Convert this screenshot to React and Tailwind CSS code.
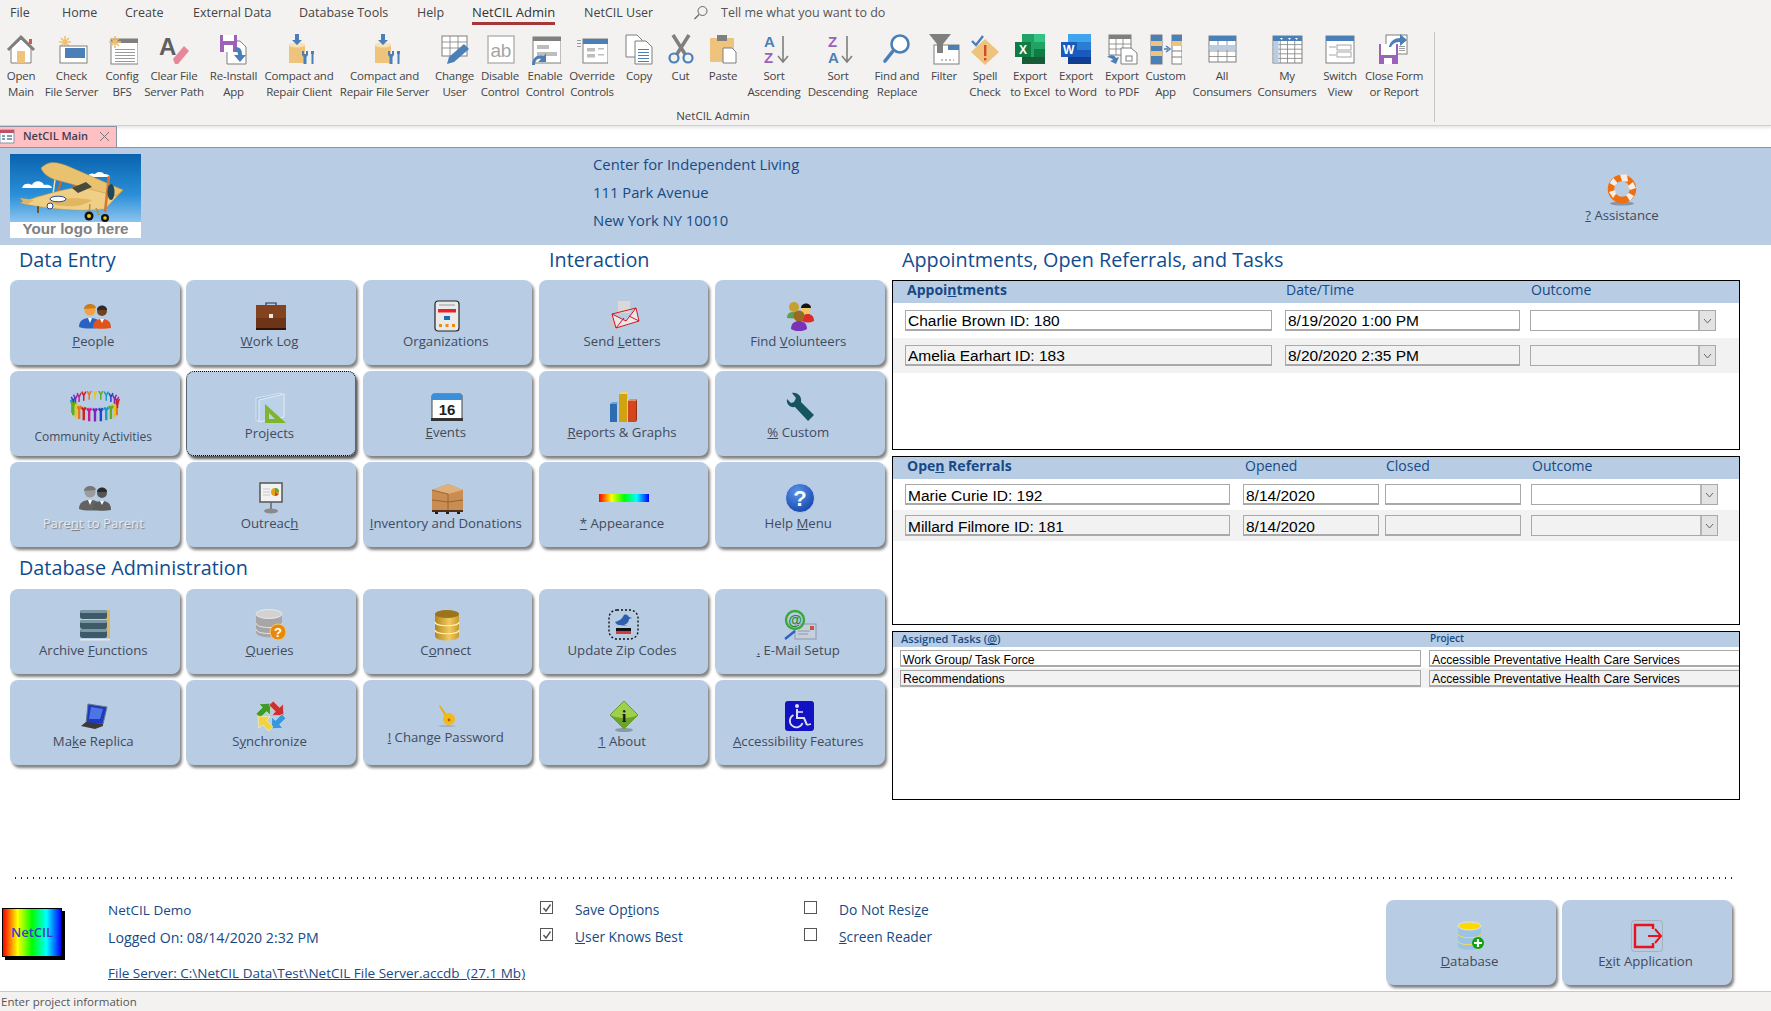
import React from 'react';

const BLUE = '#4a7fb8';
const GRAY = '#7f7f7f';
const TAN = '#eec47c';
const PURPLE = '#9a62b8';

const Sun = ({ x, y }) => (
  <g stroke="#f0c070" strokeWidth="1.6">
    <path d={`M${x - 6} ${y}h12M${x} ${y - 6}v12M${x - 4} ${y - 4}l8 8M${x - 4} ${y + 4}l8 -8`} />
  </g>
);
const Lines = ({ x, y, w, n, gap = 3, c = '#9a9a9a' }) => (
  <g stroke={c} strokeWidth="1">
    {Array.from({ length: n }).map((_, i) => (
      <path key={i} d={`M${x} ${y + i * gap + 0.5}h${w}`} />
    ))}
  </g>
);
const Grid = ({ x, y, w, h, cols, rows, head = BLUE }) => {
  const cells = [];
  for (let i = 1; i < cols; i++) cells.push(<path key={`c${i}`} d={`M${x + (w / cols) * i} ${y + 4}v${h - 4}`} />);
  for (let i = 0; i < rows; i++) cells.push(<path key={`r${i}`} d={`M${x} ${y + 4 + ((h - 4) / rows) * i}h${w}`} />);
  return (
    <g>
      <rect x={x} y={y} width={w} height={h} fill="#fff" stroke={GRAY} />
      <g stroke={GRAY} strokeWidth="0.8">{cells}</g>
      <rect x={x} y={y} width={w} height="5" fill={head} />
    </g>
  );
};
const Tools = ({ x }) => (
  <g fill={BLUE}>
    <path d={`M${x} 18l2 0 0 3 2 0 0 -3 2 0 0 4 -1.5 2 0 7 -3 0 0 -7 -1.5 -2z`} />
    <path d={`M${x + 9} 18l3 0 0 3 -0.5 0 0 10 -2 0 0 -10 -0.5 0z`} />
  </g>
);

const ribbonIcons = {
  open: (
    <g>
      <path d="M6 15L16 6l10 9v15H6z" fill="#fff" stroke={GRAY} />
      <path d="M3 17L16 4l13 13" fill="none" stroke={GRAY} strokeWidth="3" />
      <rect x="12" y="18" width="8" height="12" fill={TAN} />
      <rect x="24" y="6" width="3" height="5" fill="#d9593a" />
    </g>
  ),
  check: (
    <g>
      <Sun x={9} y={9} />
      <rect x="4" y="13" width="27" height="17" fill="#fff" stroke={GRAY} />
      <rect x="9" y="15" width="20" height="10" fill={BLUE} />
    </g>
  ),
  config: (
    <g>
      <rect x="5" y="6" width="27" height="25" fill="#fff" stroke={GRAY} />
      <rect x="5" y="6" width="27" height="4" fill={GRAY} />
      <Sun x={9} y={9} />
      <Lines x={9} y={16} w={20} n={5} />
    </g>
  ),
  clear: (
    <g>
      <text x="1" y="22" fontFamily="'Liberation Sans', sans-serif" fontWeight="700" fontSize="24" fill="#5f5f5f">A</text>
      <path d="M15 26L26 13l5 5-11 13h-3z" fill="#e8879a" />
    </g>
  ),
  reinstall: (
    <g>
      <path d="M9 8h13l6 6v17H9z" fill="#fff" stroke={GRAY} />
      <rect x="2" y="2" width="17" height="17" fill={PURPLE} />
      <rect x="5" y="2" width="11" height="6" fill="#fff" />
      <rect x="6" y="12" width="9" height="7" fill="#fff" />
      <path d="M17 14c6 0 7 3 7 8h4l-6 7-6-7h4c0-3-1-4-3-4z" fill={BLUE} />
    </g>
  ),
  compact: (
    <g>
      <path d="M6 12c0-3 16-3 16 0v18H6z" fill={TAN} />
      <ellipse cx="14" cy="12" rx="8" ry="2.5" fill="#f8e3b6" />
      <path d="M12 1h4v6h3l-5 5-5-5h3z" fill={BLUE} />
      <Tools x={19} />
    </g>
  ),
  change: (
    <g>
      <rect x="3" y="3" width="25" height="20" fill="#fff" stroke={GRAY} />
      <path d="M3 9h25M3 15h25M11 3v20M19 3v20" stroke={GRAY} strokeWidth="0.8" />
      <path d="M8 31l2-7 15-13 5 5-15 13z" fill={BLUE} />
    </g>
  ),
  disable: (
    <g>
      <rect x="4" y="3" width="26" height="27" fill="#fff" stroke="#b5b5b5" strokeWidth="1.5" />
      <text x="6.5" y="24" fontFamily="'Liberation Sans', sans-serif" fontSize="19" fill="#a5a5a5">ab</text>
    </g>
  ),
  enable: (
    <g>
      <rect x="4" y="4" width="28" height="26" fill="#fff" stroke={GRAY} />
      <rect x="4" y="4" width="28" height="4" fill={GRAY} />
      <rect x="8" y="12" width="12" height="4" fill="#bdbdbd" />
      <rect x="8" y="19" width="20" height="4" fill="#bdbdbd" />
      <path d="M3 32c0-8 6-11 12-9l2-3v9h-8l3-3c-4-1-6 2-6 6z" fill={BLUE} />
    </g>
  ),
  override: (
    <g>
      <rect x="7" y="6" width="25" height="24" fill="#fff" stroke={GRAY} />
      <rect x="7" y="6" width="25" height="5" fill={BLUE} />
      <rect x="11" y="15" width="8" height="3.5" fill="#bdbdbd" />
      <rect x="11" y="21" width="8" height="3.5" fill="#bdbdbd" />
      <rect x="22" y="15" width="6" height="1.5" fill="#bdbdbd" />
      <rect x="22" y="21" width="6" height="1.5" fill="#bdbdbd" />
      <Lines x={1} y={7} w={4} n={3} />
    </g>
  ),
  copy: (
    <g>
      <path d="M3 2h11l5 5v17H3z" fill="#fff" stroke={GRAY} />
      <path d="M12 8h11l6 6v17H12z" fill="#fff" stroke={GRAY} />
      <Lines x={15} y={16} w={11} n={5} c={BLUE} />
    </g>
  ),
  cut: (
    <g>
      <path d="M8 2l12 19M24 2L12 21" stroke={GRAY} strokeWidth="3.5" fill="none" />
      <circle cx="9" cy="25" r="4.5" fill="none" stroke={BLUE} strokeWidth="2.2" />
      <circle cx="23" cy="25" r="4.5" fill="none" stroke={BLUE} strokeWidth="2.2" />
    </g>
  ),
  paste: (
    <g>
      <rect x="3" y="5" width="24" height="24" rx="1" fill={TAN} />
      <rect x="10" y="2" width="10" height="6" fill={GRAY} />
      <path d="M16 15h9l4 4v11H16z" fill="#fff" stroke={GRAY} />
    </g>
  ),
  asc: (
    <g fontFamily="'Liberation Sans', sans-serif" fontSize="15" fontWeight="700">
      <text x="6" y="14" fill={BLUE}>A</text>
      <text x="6" y="30" fill={PURPLE}>Z</text>
      <path d="M25 3v25M20 23l5 6 5-6" stroke={GRAY} strokeWidth="1.6" fill="none" />
    </g>
  ),
  desc: (
    <g fontFamily="'Liberation Sans', sans-serif" fontSize="15" fontWeight="700">
      <text x="6" y="14" fill={PURPLE}>Z</text>
      <text x="6" y="30" fill={BLUE}>A</text>
      <path d="M25 3v25M20 23l5 6 5-6" stroke={GRAY} strokeWidth="1.6" fill="none" />
    </g>
  ),
  find: (
    <g>
      <circle cx="19" cy="11" r="8.5" fill="#fff" stroke={BLUE} strokeWidth="2.6" />
      <path d="M12 18L4 28" stroke={BLUE} strokeWidth="3.6" strokeLinecap="round" />
    </g>
  ),
  filter: (
    <g>
      <rect x="6" y="12" width="25" height="19" fill="#fff" stroke={GRAY} />
      <rect x="20" y="12" width="11" height="5" fill={BLUE} />
      <path d="M1 1h22l-8 10v9h-6v-9z" fill={GRAY} />
      <path d="M13 27h13" stroke={GRAY} strokeDasharray="2 2" />
    </g>
  ),
  spell: (
    <g>
      <path d="M16 6l14 13-14 13L2 19z" fill={TAN} />
      <rect x="15" y="12" width="2.4" height="11" fill="#d9472b" />
      <rect x="15" y="25" width="2.4" height="2.4" fill="#d9472b" />
      <path d="M3 8l4 4 7-9" stroke={BLUE} strokeWidth="2.4" fill="none" />
    </g>
  ),
  excel: (
    <g>
      <rect x="8" y="1" width="23" height="30" fill="#21a366" />
      <rect x="20" y="1" width="11" height="8" fill="#33c481" />
      <rect x="8" y="9" width="12" height="8" fill="#21a366" />
      <rect x="20" y="16" width="11" height="8" fill="#107c41" />
      <rect x="8" y="24" width="23" height="7" fill="#185c37" />
      <rect x="1" y="9" width="16" height="15" fill="#107c41" />
      <text x="5" y="21" fontFamily="'Liberation Sans', sans-serif" fontSize="12" fontWeight="700" fill="#fff">X</text>
    </g>
  ),
  word: (
    <g>
      <rect x="8" y="1" width="23" height="8" fill="#41a5ee" />
      <rect x="8" y="9" width="23" height="8" fill="#2b7cd3" />
      <rect x="8" y="17" width="23" height="7" fill="#185abd" />
      <rect x="8" y="24" width="23" height="7" fill="#103f91" />
      <rect x="1" y="9" width="16" height="15" fill="#185abd" />
      <text x="3" y="21" fontFamily="'Liberation Sans', sans-serif" fontSize="12" fontWeight="700" fill="#fff">W</text>
    </g>
  ),
  pdf: (
    <g>
      <rect x="3" y="2" width="22" height="20" fill="#fff" stroke={GRAY} />
      <rect x="3" y="2" width="22" height="4" fill={GRAY} />
      <path d="M3 11h22M3 16h22M10 6v16M17 6v16" stroke={GRAY} strokeWidth="0.8" />
      <path d="M15 15h10l6 5v11H15z" fill="#fff" stroke={GRAY} />
      <rect x="20" y="23" width="6" height="5" fill="none" stroke={GRAY} />
      <path d="M1 24c4-3 8-2 9 1l3-1-3 7-6-3 3-1c-1-2-3-2-6-3z" fill={BLUE} />
    </g>
  ),
  custom: (
    <g>
      <rect x="1" y="2" width="11" height="29" fill="#fff" stroke={GRAY} />
      <rect x="1" y="2" width="11" height="6" fill={BLUE} />
      <rect x="1" y="8" width="11" height="5" fill={TAN} />
      <rect x="1" y="13" width="11" height="5" fill={BLUE} />
      <rect x="1" y="18" width="11" height="5" fill={TAN} />
      <rect x="1" y="23" width="11" height="8" fill={BLUE} />
      <rect x="22" y="2" width="10" height="29" fill="#fff" stroke={GRAY} />
      <rect x="22" y="2" width="10" height="6" fill={BLUE} />
      <rect x="22" y="8" width="10" height="5" fill={TAN} />
      <path d="M22 18h10M22 24h10" stroke={GRAY} />
      <path d="M14 16h4M16 13l4 3-4 3" stroke={BLUE} strokeWidth="1.5" fill="none" />
    </g>
  ),
  all: (
    <g>
      <Grid x={3} y={3} w={27} h={26} cols={3} rows={4} />
      <rect x="3.5" y="12" width="26" height="5" fill="#b8cce4" />
    </g>
  ),
  my: (
    <g>
      <Grid x={2} y={3} w={29} h={27} cols={4} rows={5} head="#4a7fb8" />
      <rect x="2.5" y="8" width="5" height="21.5" fill="#b8cce4" />
      <path d="M9 5h3l-1.5 2zM17 5h3l-1.5 2zM24 5h3l-1.5 2z" fill="#fff" />
    </g>
  ),
  switch: (
    <g>
      <rect x="2" y="3" width="28" height="27" fill="#fff" stroke={GRAY} />
      <rect x="2" y="3" width="28" height="5" fill={BLUE} />
      <path d="M5 14h7M5 22h7" stroke="#a5a5a5" />
      <rect x="13" y="12" width="14" height="5" fill="#fff" stroke="#a5a5a5" />
      <rect x="13" y="19" width="14" height="5" fill="#fff" stroke="#a5a5a5" />
    </g>
  ),
  close: (
    <g>
      <rect x="8" y="2" width="21" height="19" fill="#fff" stroke={GRAY} />
      <Lines x={21} y={13} w={6} n={3} gap={2} />
      <rect x="1" y="11" width="19" height="20" fill={PURPLE} />
      <rect x="3" y="11" width="15" height="11" fill="#fff" />
      <rect x="6" y="25" width="8" height="6" fill="#fff" />
      <path d="M11 14c1-6 6-9 11-9V1l7 6-7 6V9c-4 0-7 1-9 5z" fill={BLUE} />
    </g>
  ),
};

const ribbon = [
  ['open', 38, 'Open', 'Main'],
  ['check', 63, 'Check', 'File Server'],
  ['config', 38, 'Config', 'BFS'],
  ['clear', 66, 'Clear File', 'Server Path'],
  ['reinstall', 53, 'Re-Install', 'App'],
  ['compact', 78, 'Compact and', 'Repair Client'],
  ['compact', 93, 'Compact and', 'Repair File Server'],
  ['change', 47, 'Change', 'User'],
  ['disable', 44, 'Disable', 'Control'],
  ['enable', 46, 'Enable', 'Control'],
  ['override', 48, 'Override', 'Controls'],
  ['copy', 46, 'Copy', ''],
  ['cut', 37, 'Cut', ''],
  ['paste', 48, 'Paste', ''],
  ['asc', 54, 'Sort', 'Ascending'],
  ['desc', 74, 'Sort', 'Descending'],
  ['find', 44, 'Find and', 'Replace'],
  ['filter', 50, 'Filter', ''],
  ['spell', 32, 'Spell', 'Check'],
  ['excel', 58, 'Export', 'to Excel'],
  ['word', 34, 'Export', 'to Word'],
  ['pdf', 58, 'Export', 'to PDF'],
  ['custom', 29, 'Custom', 'App'],
  ['all', 84, 'All', 'Consumers'],
  ['my', 46, 'My', 'Consumers'],
  ['switch', 60, 'Switch', 'View'],
  ['close', 48, 'Close Form', 'or Report'],
];

const menu = [
  ['File', 'w-[52px]'],
  ['Home', 'w-[63px]'],
  ['Create', 'w-[68px]'],
  ['External Data', 'w-[106px]'],
  ['Database Tools', 'w-[118px]'],
  ['Help', 'w-[55px]'],
];

const People = ({ a, b, c, d, e }) => (
  <svg width="32" height="32" viewBox="0 0 32 32">
    <circle cx="11" cy="10" r="5.5" fill={a} />
    <path d="M5 9c0-6 11-7 12-1z" fill={e} />
    <path d="M0 27c0-7 5-9 11-9s11 2 11 9c-6 2-16 2-22 0z" fill={b} />
    <path d="M9 18l2 5 2-5z" fill="#fff" />
    <circle cx="23" cy="11" r="5" fill={c} />
    <path d="M18 10c0-6 10-6 10 0z" fill="#2b2b2b" />
    <path d="M14 28c0-7 4-9 9-9s9 2 9 9c-5 1-13 1-18 0z" fill={d} />
    <path d="M21 19l2 4 2-4z" fill="#fff" />
  </svg>
);

const ringColors = ['#d01f1f', '#e0771a', '#e8c61a', '#5cae21', '#1c9bc4', '#2545c9', '#7d26b8', '#c21e8f'];

const bigIcons = {
  people: <People a="#f2a044" b="#2a62c4" c="#6e4322" d="#e0531e" e="#c97c20" />,
  parent: <People a="#9c9c9c" b="#636363" c="#555" d="#5c5c5c" e="#777" />,
  log: (
    <svg width="32" height="32" viewBox="0 0 32 32">
      <path d="M11 6V3h10v3" fill="none" stroke="#333" strokeWidth="1.2" />
      <rect x="1" y="5" width="30" height="25" rx="1.5" fill="#6e3418" />
      <rect x="1" y="5" width="30" height="13" fill="#84431f" />
      <rect x="14" y="14" width="4" height="4" fill="#e8e8e8" />
      <rect x="1" y="28" width="30" height="2" fill="#2e1408" />
    </svg>
  ),
  org: (
    <svg width="26" height="32" viewBox="0 0 26 32">
      <rect x="1" y="1" width="24" height="30" rx="3" fill="#eaeaea" stroke="#222" strokeWidth="1.2" />
      <rect x="4" y="9" width="18" height="3.5" fill="#e8222a" />
      <rect x="10" y="16" width="6" height="4" fill="#1c6ab0" />
      <path d="M5 24h3v3H5zM11.5 24h3v3h-3zM18 24h3v3h-3z" fill="#f08a12" />
      <path d="M5 5h16" stroke="#9a9a9a" />
    </svg>
  ),
  letters: (
    <svg width="32" height="32" viewBox="0 0 32 32">
      <rect x="10" y="1" width="12" height="12" fill="#d9d9d9" />
      <path d="M1 24l3-8 6 4-2 10z" fill="#c8c8c8" />
      <path d="M4 14l24-6 3 13-23 7zM4 14l14 7 10-13M8 28l8-10M31 21l-10-5" fill="#e6e8ec" stroke="#d8141c" strokeWidth="1" strokeLinejoin="round" />
    </svg>
  ),
  volunteers: (
    <svg width="28" height="30" viewBox="0 0 28 30">
      <circle cx="8" cy="6" r="5" fill="#c7a02e" />
      <path d="M1 17c0-5 3-6 7-6s6 2 6 7z" fill="#5f9e52" />
      <circle cx="20" cy="8" r="4.5" fill="#f3c75a" />
      <path d="M15 7c0-6 10-6 10 0z" fill="#141414" />
      <path d="M16 20c0-6 3-7 6-7s6 2 6 7c-4 2-8 2-12 0z" fill="#de2a2a" />
      <circle cx="13" cy="15" r="5.5" fill="#9b6a1f" />
      <path d="M5 28c0-6 4-8 8-8s8 2 8 8c-5 3-11 3-16 0z" fill="#7a32b8" />
    </svg>
  ),
  community: (
    <svg width="50" height="32" viewBox="0 0 50 32">
      {Array.from({ length: 24 }).map((_, k) => {
        const i = (k * 7 + 18) % 24;
        const a = (i / 24) * Math.PI * 2;
        const x = 25 + 22.5 * Math.cos(a);
        const y = 14 + 8.5 * Math.sin(a);
        const front = Math.sin(a) > 0;
        return (
          <path
            key={k}
            d={`M${x - 2} ${y - (front ? 5 : 6)}L${x} ${y - 2}L${x + 2} ${y - (front ? 5 : 6)}M${x} ${y - 2}V${y + (front ? 8 : 3)}`}
            stroke={ringColors[i % 8]}
            strokeWidth={front ? 2.4 : 1.5}
            fill="none"
          />
        );
      })}
    </svg>
  ),
  projects: (
    <svg width="32" height="32" viewBox="0 0 32 32">
      <path d="M1 6l25-5v23L1 29z" fill="#a9c4e0" stroke="#d8e3ef" />
      <path d="M4 8l25-6v23L4 30z" fill="#bcd2e8" stroke="#e5edf5" />
      <path d="M10 12l21 19H10z" fill="#7fb52a" />
      <path d="M14 21l6 6h-6z" fill="#bcd2e8" />
    </svg>
  ),
  events: (
    <svg width="32" height="30" viewBox="0 0 32 30">
      <rect x="1" y="2" width="30" height="26" rx="2" fill="#fff" stroke="#444" />
      <rect x="1" y="2" width="30" height="6" fill="#3d8ed8" />
      <rect x="0" y="26" width="32" height="3" fill="#333" />
      <text x="16" y="23" textAnchor="middle" fontFamily="'Liberation Sans', sans-serif" fontWeight="700" fontSize="15" fill="#222">16</text>
    </svg>
  ),
  reports: (
    <svg width="30" height="32" viewBox="0 0 30 32">
      <path d="M1 13h7v18H1z" fill="#2d6cb0" />
      <path d="M1 13l2-2h6l-1 2z" fill="#6ea3d8" />
      <path d="M10 3h8v28h-8z" fill="#d1a40f" />
      <path d="M10 3l3-2h6l-1 2z" fill="#f1d860" />
      <path d="M19 10h8v21h-8z" fill="#d5461f" />
      <path d="M19 10l2-2h7l-1 2z" fill="#ee8862" />
      <path d="M27 10l1-2v21l-1 2z" fill="#94300f" />
    </svg>
  ),
  wrench: (
    <svg width="30" height="30" viewBox="0 0 30 30">
      <path d="M2 7c-1 5 3 9 8 8l13 14 6-6L16 10C17 5 13 0 7 1l4 5-2 4-3 1z" fill="#16555f" />
    </svg>
  ),
  outreach: (
    <svg width="24" height="32" viewBox="0 0 24 32">
      <rect x="1" y="1" width="22" height="19" fill="#f2f2f2" stroke="#555" strokeWidth="1.5" />
      <circle cx="16" cy="10" r="4" fill="#e2a41c" />
      <path d="M16 6a4 4 0 0 1 4 4h-4z" fill="#52a84a" />
      <path d="M16 10v4a4 4 0 0 0 3.5-2z" fill="#cf4030" />
      <path d="M4 7h7M4 10h7M4 13h7" stroke="#c8c8c8" />
      <path d="M12 20v7" stroke="#666" strokeWidth="1.5" />
      <ellipse cx="12" cy="29" rx="7" ry="2.5" fill="#8a8a8a" />
    </svg>
  ),
  inventory: (
    <svg width="32" height="32" viewBox="0 0 32 32">
      <path d="M1 8l16-6 15 6v20H1z" fill="#c98c52" />
      <path d="M1 8l16-6 15 6-15 4z" fill="#e0b07c" />
      <path d="M1 8l16 4v16M1 18l16 2 15-2" stroke="#8a5a2c" fill="none" strokeWidth="0.8" />
      <path d="M1 28h31v2H1z" fill="#4a3018" />
      <path d="M4 30h3v2H4zM15 30h3v2h-3zM26 30h3v2h-3z" fill="#2a1a0c" />
    </svg>
  ),
  rainbow: <div className="w-[50px] h-[8px] my-[12px] bg-[linear-gradient(90deg,#ff0000,#ffff00,#00ff00,#00ffff,#0000ff)]" />,
  help: (
    <svg width="30" height="30" viewBox="0 0 30 30">
      <defs>
        <radialGradient id="helpBall" cx="0.4" cy="0.3" r="0.8">
          <stop offset="0" stopColor="#5a94ea" />
          <stop offset="1" stopColor="#0f3fa8" />
        </radialGradient>
      </defs>
      <circle cx="15" cy="15" r="14.5" fill="url(#helpBall)" stroke="#cfdcef" strokeWidth="0.8" />
      <text x="15" y="23" textAnchor="middle" fontFamily="'Liberation Sans', sans-serif" fontWeight="700" fontSize="22" fill="#fff">?</text>
    </svg>
  ),
  archive: (
    <svg width="32" height="32" viewBox="0 0 32 32">
      <rect x="26" y="1" width="5" height="28" fill="#d8b860" />
      {[1, 11, 20].map((y) => (
        <g key={y}>
          <rect x="1" y={y} width="27" height="9" rx="2.5" fill="#3e5a68" />
          <rect x="1" y={y} width="27" height="3" rx="1.5" fill="#7b97a5" />
        </g>
      ))}
      <path d="M1 30h30v1.5H1z" fill="#e6e6e6" />
    </svg>
  ),
  queries: (
    <svg width="32" height="32" viewBox="0 0 32 32">
      <path d="M1 5v18c0 7 26 7 26 0V5z" fill="#a6a6a6" />
      <ellipse cx="14" cy="5" rx="13" ry="4.5" fill="#d2d2d2" stroke="#e8e8e8" />
      <path d="M1 14c0 6 26 6 26 0M1 20c0 6 26 6 26 0" stroke="#e5e5e5" fill="none" />
      <circle cx="23" cy="23" r="8" fill="#e8890f" stroke="#f7c871" />
      <text x="23" y="28" textAnchor="middle" fontFamily="'Liberation Sans', sans-serif" fontWeight="700" fontSize="13" fill="#fff">?</text>
    </svg>
  ),
  connect: (
    <svg width="26" height="32" viewBox="0 0 26 32">
      <defs>
        <linearGradient id="goldDb" x1="0" x2="1">
          <stop offset="0" stopColor="#b3861c" />
          <stop offset="0.6" stopColor="#f2ca60" />
          <stop offset="1" stopColor="#c99a2c" />
        </linearGradient>
      </defs>
      <path d="M1 5v22c0 6 24 6 24 0V5z" fill="url(#goldDb)" />
      <ellipse cx="13" cy="5" rx="12" ry="4" fill="#9c741a" />
      <path d="M1 13c0 5 24 5 24 0M1 21c0 5 24 5 24 0" stroke="#fff2c6" fill="none" strokeWidth="1.2" />
    </svg>
  ),
  zip: (
    <svg width="31" height="31" viewBox="0 0 31 31">
      <rect x="1" y="1" width="29" height="29" rx="8" fill="none" stroke="#111" strokeWidth="1.4" strokeDasharray="2 2" />
      <path d="M7 13c4-1 7-3 9-7 2-1 4 0 5 2l3 1-3 1c0 3-2 5-5 6l4 1-9-1c-2 0-3-2-4-3z" fill="#2f5fa8" />
      <rect x="8" y="19" width="15" height="3" fill="#111" />
      <rect x="8" y="22" width="15" height="3" fill="#d8383a" />
    </svg>
  ),
  email: (
    <svg width="34" height="32" viewBox="0 0 34 32">
      <rect x="12" y="15" width="21" height="15" fill="#c6cfdc" stroke="#8d98a8" />
      <path d="M15 22h12M15 25h10" stroke="#8d98a8" />
      <rect x="27" y="17" width="4" height="4" fill="#c0564a" />
      <circle cx="12" cy="11" r="9" fill="none" stroke="#3aa83a" strokeWidth="2.4" />
      <text x="12" y="16" textAnchor="middle" fontFamily="'Liberation Sans', sans-serif" fontWeight="700" fontSize="14" fill="#278a2c">@</text>
      <path d="M12 22L2 30" stroke="#2c60c8" strokeWidth="2.5" />
    </svg>
  ),
  replica: (
    <svg width="30" height="26" viewBox="0 0 30 26">
      <path d="M8 1l19 3-4 17H6z" fill="#1d3bc0" stroke="#6a7a8a" />
      <path d="M11 4l12 2-3 10H9z" fill="#4d76e4" />
      <path d="M6 19l17 2 0 2-8 3-14-3z" fill="#3a3a3a" />
    </svg>
  ),
  sync: (
    <svg width="32" height="32" viewBox="0 0 32 32">
      <path d="M0 -9L8 0H3V9H-3V0H-8Z" transform="translate(9.5 9.5) rotate(45)" fill="#3f9a2a" stroke="#d9e6cf" strokeWidth="0.6" />
      <path d="M0 -9L8 0H3V9H-3V0H-8Z" transform="translate(22.5 9.5) rotate(135)" fill="#cf2f2f" stroke="#f0d0d0" strokeWidth="0.6" />
      <path d="M0 -9L8 0H3V9H-3V0H-8Z" transform="translate(22.5 22.5) rotate(225)" fill="#3b97dd" stroke="#d4e8f8" strokeWidth="0.6" />
      <path d="M0 -9L8 0H3V9H-3V0H-8Z" transform="translate(9.5 22.5) rotate(315)" fill="#f2d43a" stroke="#fbf2c4" strokeWidth="0.6" />
    </svg>
  ),
  key: (
    <svg width="20" height="22" viewBox="0 0 20 22">
      <path d="M2 1l1-1 8 11-2 2z" fill="#e8b010" />
      <circle cx="12" cy="14" r="6" fill="#f4b818" />
      <circle cx="12" cy="15" r="1.4" fill="#9a6a08" />
      <ellipse cx="10" cy="21" rx="9" ry="0.8" fill="#9aa8ba" />
    </svg>
  ),
  about: (
    <svg width="30" height="32" viewBox="0 0 30 32">
      <ellipse cx="15" cy="30" rx="9" ry="2" fill="#8b96a6" />
      <path d="M15 1l14 14-14 14L1 15z" fill="#9ed04a" stroke="#5a8a1c" strokeWidth="0.8" />
      <path d="M1 15c8 4 20 4 28 0L15 29z" fill="#6aa52a" />
      <text x="15" y="22" textAnchor="middle" fontFamily="'Liberation Serif', serif" fontWeight="700" fontSize="17" fill="#1a1a1a">i</text>
    </svg>
  ),
  access: (
    <svg width="29" height="30" viewBox="0 0 29 30">
      <rect x="0" y="0" width="29" height="30" rx="3" fill="#1212c4" />
      <circle cx="12" cy="5" r="2" fill="#dde" />
      <path d="M12 8v9h7l3 7" fill="none" stroke="#dde" strokeWidth="2" />
      <path d="M12 11h6" stroke="#dde" strokeWidth="1.6" />
      <path d="M8.5 14a6.5 6.5 0 1 0 9 8" fill="none" stroke="#dde" strokeWidth="1.8" />
      <path d="M22 24l4-1" stroke="#dde" strokeWidth="1.6" />
    </svg>
  ),
  database: (
    <svg width="28" height="30" viewBox="0 0 28 30">
      <path d="M1 5v20c0 5 23 5 23 0V5z" fill="#9cc3e6" />
      <ellipse cx="12.5" cy="5" rx="11.5" ry="4" fill="#ffd800" stroke="#dbe6f0" />
      <path d="M1 13c0 5 23 5 23 0M1 20c0 5 23 5 23 0" stroke="#f0e050" fill="none" />
      <circle cx="21" cy="22" r="6" fill="#0ca40c" />
      <path d="M21 18v8M17 22h8" stroke="#fff" strokeWidth="2.2" />
    </svg>
  ),
  exit: (
    <svg width="32" height="32" viewBox="0 0 32 32">
      <rect x="0.5" y="0.5" width="31" height="31" rx="3" fill="none" stroke="#9aa3ae" strokeWidth="0.7" />
      <path d="M22 9V5H4v22h18v-4" fill="none" stroke="#e8141c" strokeWidth="2.4" />
      <path d="M17 16h13M24 9l6 7-6 7" fill="none" stroke="#e8141c" strokeWidth="2" />
    </svg>
  ),
};

const btnBase = 'bg-[#b8cce4] rounded-[8px] h-[85px] flex flex-col items-center pt-[19px] text-[13.2px] leading-[18px] text-[#414b5c]';
const btnShadow = 'shadow-[2px_3px_3px_#808080]';

const Btn = ({ icon, children, focus, labelCls = '' }) => (
  <div className={`${btnBase} ${focus ? 'border border-dotted border-black shadow-[2px_3px_3px_#555]' : btnShadow}`}>
    <div className="h-[33px] flex items-center justify-center">{bigIcons[icon]}</div>
    <div className={`whitespace-nowrap pr-[3px] ${labelCls}`}>{children}</div>
  </div>
);

const Input = ({ w, text, small, low }) => (
  <div className={`${w} ${small ? 'h-[17px] text-[12.2px] pt-[4px]' : 'h-[21px] text-[15.5px]'} ${low ? 'pt-[4px]' : ''} ${!small && !low ? 'pt-[1px]' : ''} shrink-0 border border-b-2 border-[#a9a9a9] pl-[2px] flex items-center text-black whitespace-nowrap overflow-hidden font-['Liberation_Sans',sans-serif]`}>
    {text}
  </div>
);

const Combo = ({ w }) => (
  <div className={`${w} h-[21px] shrink-0 border border-[#a9a9a9] flex justify-end`}>
    <div className="w-[17px] bg-[#e3e3e3] border-l-2 border-[#b5b5b5] flex items-center justify-center">
      <svg width="9" height="6" viewBox="0 0 9 6">
        <path d="M1 1l3.5 4L8 1" fill="none" stroke="#666" />
      </svg>
    </div>
  </div>
);

const CheckRow = ({ checked, children }) => (
  <div className="flex h-[20px] text-[13.8px]">
    <div className="w-[13px] h-[13px] border border-[#555] flex items-center justify-center shrink-0">
      {checked && (
        <svg width="10" height="10" viewBox="0 0 10 10">
          <path d="M1.5 5l2.5 3L8.5 1.5" fill="none" stroke="#555" strokeWidth="1.4" />
        </svg>
      )}
    </div>
    <div className="ml-[22px] leading-[18px] whitespace-nowrap">{children}</div>
  </div>
);

const Plane = () => (
  <svg width="131" height="68" viewBox="0 0 131 68" className="block">
    <defs>
      <linearGradient id="sky" x1="0" y1="0" x2="0" y2="1">
        <stop offset="0" stopColor="#0a63ae" />
        <stop offset="0.6" stopColor="#2a8fd8" />
        <stop offset="1" stopColor="#8cc4ee" />
      </linearGradient>
    </defs>
    <rect width="131" height="68" fill="url(#sky)" />
    <path d="M12 34c2-6 8-4 10-3 2-5 10-5 12 0 4-1 8 1 8 3z" fill="#fff" />
    <path d="M78 22c1-3 5-3 7-2 3-3 8-2 9 0 3 0 6 1 6 3H78z" fill="#fff" />
    <path d="M52 24l-7 24M62 26l10 22" stroke="#c9692a" strokeWidth="2.2" />
    <path d="M46 18l-4 30" stroke="#f3e2b0" strokeWidth="1.5" />
    <path d="M10 49C25 43 60 32 95 30l18 6-18 19C70 58 35 55 10 49z" fill="#efcf85" stroke="#b98f3f" strokeWidth="0.5" />
    <path d="M31 14C40 5 50 9 60 13l53 23-7 6-56-15C40 25 33 20 31 14z" fill="#e9c26f" stroke="#b98f3f" strokeWidth="0.5" />
    <path d="M24 46l-14-2 6 7z" fill="#e0b660" />
    <path d="M38 48c12-4 30-5 44-2-10 8-32 8-44 2z" fill="#e2b561" />
    <ellipse cx="48" cy="45" rx="8" ry="2.8" fill="#fff" stroke="#2a4a8a" />
    <circle cx="40" cy="52" r="3" fill="#fff" stroke="#2a4a8a" />
    <path d="M62 34l14-6 6 5-14 6z" fill="#4a4a3a" />
    <path d="M99 22l-4 36" stroke="#d8742e" strokeWidth="2.5" />
    <ellipse cx="101" cy="38" rx="3.5" ry="8" fill="#20485a" />
    <path d="M86 54l3 7M80 50l-1 10" stroke="#b98f3f" strokeWidth="1.5" />
    <circle cx="79" cy="62" r="4.5" fill="#111" />
    <circle cx="79" cy="62" r="2" fill="#f4c81c" />
    <circle cx="95" cy="64" r="4" fill="#111" />
    <circle cx="95" cy="64" r="1.8" fill="#f4c81c" />
    <path d="M28 52v7" stroke="#6a5a2a" strokeWidth="2" />
  </svg>
);

const Lifebuoy = () => (
  <svg width="30" height="32" viewBox="0 0 30 32">
    <ellipse cx="15" cy="29.5" rx="12" ry="2" fill="#8696ab" />
    <circle cx="15" cy="15" r="11" fill="none" stroke="#ef6f10" strokeWidth="6.5" />
    <path d="M13 0.5h7l1 7h-6zM26 8l3 6-6 2-2-4zM27 22l-4 5-4-6 3-2zM6 24l-4-6 6-2 1 4zM2.5 9l4-5 4 5-3 3z" fill="#f6eee4" />
  </svg>
);

const App = () => {
  return (
    <div className="w-[1771px] h-[1011px] flex flex-col overflow-hidden bg-white font-['Open_Sans',sans-serif]">
      {/* Ribbon */}
      <div className="h-[126px] shrink-0 bg-[#f3f2f1] border-b border-[#d2d0ce] shadow-[0_2px_3px_#e6e6e6] text-[11.5px] tracking-[-0.2px] text-[#444]">
        <div className="h-[25px] flex pl-[10px] text-[12.5px] tracking-normal relative">
          {menu.map(([m, w]) => (
            <div key={m} className={`${w} leading-[25px] whitespace-nowrap`}>{m}</div>
          ))}
          <div className="w-[112px] whitespace-nowrap">
            <div className="inline-block h-[25px] leading-[24px] border-b-[3px] border-[#a4373a] text-[13px] font-medium text-[#333]">NetCIL Admin</div>
          </div>
          <div className="w-[109px] leading-[25px] whitespace-nowrap">NetCIL User</div>
          <div className="w-[28px] flex items-center">
            <svg width="16" height="16" viewBox="0 0 16 16">
              <circle cx="9.5" cy="6" r="4.5" fill="none" stroke="#666" />
              <path d="M6 9.5L1.5 14" stroke="#666" strokeWidth="1.3" />
            </svg>
          </div>
          <div className="leading-[25px] whitespace-nowrap text-[#555]">Tell me what you want to do</div>
        </div>
        <div className="flex">
          <div className="w-[1434px] shrink-0">
            <div className="flex pl-[2px] pt-[8px] h-[83px]">
              {ribbon.map(([ic, w, a, b], i) => (
                <div key={i} style={{ width: w }} className="shrink-0 flex flex-col items-center">
                  <svg width="32" height="32" viewBox="0 0 32 32" className="shrink-0">{ribbonIcons[ic]}</svg>
                  <div className="mt-[3px] leading-[16px] text-center whitespace-nowrap">{a}</div>
                  <div className="leading-[16px] text-center whitespace-nowrap">{b}</div>
                </div>
              ))}
            </div>
            <div className="text-center pr-[8px] leading-[16px] text-[11.5px] tracking-normal">NetCIL Admin</div>
          </div>
          <div className="w-px h-[90px] mt-[7px] bg-[#c4c4c4]" />
        </div>
      </div>

      {/* Tab strip */}
      <div className="h-[22px] shrink-0 border-b border-[#8a94a3] flex">
        <div className="w-[117px] bg-[#ffc0c4] border-r border-t border-[#8a94a3] flex items-center relative pb-[2px]">
          <svg width="15" height="15" viewBox="0 0 15 15" className="shrink-0">
            <rect x="0" y="1" width="14" height="13" fill="#fff" stroke="#8a94a3" />
            <rect x="0" y="1" width="14" height="3" fill="#c0506a" />
            <path d="M2 7h3M2 10h3M7 7h5M7 10h5" stroke="#5a7fa8" strokeWidth="1.5" />
          </svg>
          <div className="ml-[8px] text-[11px] font-semibold text-[#3b3f55] whitespace-nowrap">NetCIL Main</div>
          <svg width="11" height="11" viewBox="0 0 11 11" className="ml-auto mr-[6px]">
            <path d="M1 1l9 9M10 1l-9 9" stroke="#777" />
          </svg>
        </div>
      </div>

      {/* Agency header */}
      <div className="h-[97px] shrink-0 bg-[#b8cce4] flex text-[14.8px] text-[#174a85]">
        <div className="ml-[10px] mt-[6px] w-[131px] h-[84px] shrink-0 bg-white overflow-hidden">
          <Plane />
          <div className="text-[15.2px] leading-[14px] font-bold text-center text-[#808080] font-['Liberation_Sans',sans-serif] whitespace-nowrap">Your logo here</div>
        </div>
        <div className="ml-[452px] pt-[2px] leading-[28px]">
          <div>Center for Independent Living</div>
          <div>111 Park Avenue</div>
          <div>New York NY 10010</div>
        </div>
        <div className="ml-auto mr-[99px] w-[100px] flex flex-col items-center pt-[26px]">
          <Lifebuoy />
          <div className="text-[13.2px] leading-[18px] text-[#414b5c] whitespace-nowrap"><u>?</u> Assistance</div>
        </div>
      </div>

      {/* Main */}
      <div className="h-[625px] shrink-0 flex">
        <div className="w-[886px] shrink-0 pl-[10px]">
          <div className="h-[35px] flex text-[19.8px] leading-[30px] text-[#0f4c8f]">
            <div className="w-[539px] pl-[9px]">Data Entry</div>
            <div>Interaction</div>
          </div>
          <div className="grid grid-cols-[repeat(5,169.5px)] gap-x-[6.75px] gap-y-[6px]">
            <Btn icon="people"><u>P</u>eople</Btn>
            <Btn icon="log"><u>W</u>ork Log</Btn>
            <Btn icon="org">Organizations</Btn>
            <Btn icon="letters">Send <u>L</u>etters</Btn>
            <Btn icon="volunteers">Find <u>V</u>olunteers</Btn>
            <Btn icon="community" labelCls="mt-[5px] text-[12px]">Community A<u>c</u>tivities</Btn>
            <Btn icon="projects" focus>Projects</Btn>
            <Btn icon="events"><u>E</u>vents</Btn>
            <Btn icon="reports"><u>R</u>eports &amp; Graphs</Btn>
            <Btn icon="wrench"><u>%</u> Custom</Btn>
            <Btn icon="parent" labelCls="text-[#e4e9f0] [text-shadow:1px_1px_1px_#7f7f7f]">Pare<u>n</u>t to Parent</Btn>
            <Btn icon="outreach">Outreac<u>h</u></Btn>
            <Btn icon="inventory"><u>I</u>nventory and Donations</Btn>
            <Btn icon="rainbow"><u>*</u> Appearance</Btn>
            <Btn icon="help">Help <u>M</u>enu</Btn>
          </div>
          <div className="h-[42px] pl-[9px] pt-[6px] text-[19.8px] leading-[30px] text-[#0f4c8f]">Database Administration</div>
          <div className="grid grid-cols-[repeat(5,169.5px)] gap-x-[6.75px] gap-y-[6px]">
            <Btn icon="archive">Archive <u>F</u>unctions</Btn>
            <Btn icon="queries"><u>Q</u>ueries</Btn>
            <Btn icon="connect">C<u>o</u>nnect</Btn>
            <Btn icon="zip">Update Zip Codes</Btn>
            <Btn icon="email"><u>.</u> E-Mail Setup</Btn>
            <Btn icon="replica">Ma<u>k</u>e Replica</Btn>
            <Btn icon="sync">S<u>y</u>nchronize</Btn>
            <Btn icon="key" labelCls="-mt-[4px]"><u>!</u> Change Password</Btn>
            <Btn icon="about"><u>1</u> About</Btn>
            <Btn icon="access"><u>A</u>ccessibility Features</Btn>
          </div>
        </div>

        <div className="ml-[6px] w-[848px] shrink-0 text-[14px] text-[#174a85]">
          <div className="h-[35px] pl-[10px] text-[19.8px] leading-[30px] text-[#0f4c8f] whitespace-nowrap">Appointments, Open Referrals, and Tasks</div>

          <div className="h-[170px] border border-black">
            <div className="h-[22px] bg-[#b8cce4] flex pl-[14px] leading-[18px]">
              <div className="w-[379px] font-bold">Appoi<u>n</u>tments</div>
              <div className="w-[245px]">Date/Time</div>
              <div>Outcome</div>
            </div>
            <div className="h-[35px] flex items-center pl-[12px] gap-x-[13px]">
              <Input w="w-[367px]" text="Charlie Brown ID: 180" />
              <Input w="w-[235px]" text="8/19/2020 1:00 PM" />
              <div className="-ml-[3px]"><Combo w="w-[186px]" /></div>
            </div>
            <div className="h-[35px] flex items-center pl-[12px] gap-x-[13px] bg-[#f2f2f2]">
              <Input w="w-[367px]" text="Amelia Earhart ID: 183" />
              <Input w="w-[235px]" text="8/20/2020 2:35 PM" />
              <div className="-ml-[3px]"><Combo w="w-[186px]" /></div>
            </div>
          </div>

          <div className="h-[169px] mt-[6px] border border-black">
            <div className="h-[22px] bg-[#b8cce4] flex pl-[14px] leading-[18px]">
              <div className="w-[338px] font-bold">Ope<u>n</u> Referrals</div>
              <div className="w-[141px]">Opened</div>
              <div className="w-[146px]">Closed</div>
              <div>Outcome</div>
            </div>
            <div className="h-[31px] flex items-center pl-[12px]">
              <Input w="w-[325px]" text="Marie Curie ID: 192" low />
              <div className="ml-[13px]"><Input w="w-[136px]" text="8/14/2020" low /></div>
              <div className="ml-[6px]"><Input w="w-[136px]" text="" low /></div>
              <div className="ml-[10px]"><Combo w="w-[187px]" /></div>
            </div>
            <div className="h-[31px] flex items-center pl-[12px] bg-[#f2f2f2]">
              <Input w="w-[325px]" text="Millard Filmore ID: 181" low />
              <div className="ml-[13px]"><Input w="w-[136px]" text="8/14/2020" low /></div>
              <div className="ml-[6px]"><Input w="w-[136px]" text="" low /></div>
              <div className="ml-[10px]"><Combo w="w-[187px]" /></div>
            </div>
          </div>

          <div className="h-[169px] mt-[6px] border border-black overflow-hidden">
            <div className="h-[15px] bg-[#b8cce4] flex pl-[8px] text-[11px] leading-[14px] font-semibold">
              <div className="w-[529px]">Assigned Tasks (<u>@</u>)</div>
              <div className="text-[10px] leading-[12px]">Project</div>
            </div>
            <div className="h-[21px] flex items-center pl-[7px] pt-[2px]">
              <Input w="w-[521px]" text="Work Group/ Task Force" small />
              <div className="ml-[8px]"><Input w="w-[320px]" text="Accessible Preventative Health Care Services" small /></div>
            </div>
            <div className="h-[20px] flex items-center pl-[7px] bg-[#f2f2f2]">
              <Input w="w-[521px]" text="Recommendations" small />
              <div className="ml-[8px]"><Input w="w-[320px]" text="Accessible Preventative Health Care Services" small /></div>
            </div>
          </div>
        </div>
      </div>

      {/* Footer */}
      <div className="h-[121px] shrink-0 pt-[7px] text-[13.5px] text-[#174a85]">
        <div className="h-[2px] ml-[15px] mr-[38px] bg-[repeating-linear-gradient(90deg,#222_0,#222_1.5px,transparent_1.5px,transparent_6px)]" />
        <div className="flex">
          <div className="ml-[2px] mt-[29px] w-[60px] h-[49px] shrink-0 border border-black shadow-[3px_3px_0_#000] bg-[linear-gradient(90deg,#ff0000,#ffff00,#00ff00,#00ffff,#0000ff)] flex items-center justify-center text-[13px] font-semibold text-[#3a3ac8]">NetCIL</div>
          <div className="ml-[46px] w-[432px] shrink-0 pt-[21px] leading-[20px]">
            <div>NetCIL Demo</div>
            <div className="mt-[8px] text-[14.2px]">Logged On: 08/14/2020 2:32 PM</div>
            <div className="mt-[15px] underline whitespace-nowrap">File Server: C:\NetCIL Data\Test\NetCIL File Server.accdb&nbsp; (27.1 Mb)</div>
          </div>
          <div className="w-[264px] shrink-0 pt-[22px]">
            <CheckRow checked>Save Op<u>t</u>ions</CheckRow>
            <div className="mt-[7px]"><CheckRow checked><u>U</u>ser Knows Best</CheckRow></div>
          </div>
          <div className="pt-[22px]">
            <CheckRow>Do Not Resi<u>z</u>e</CheckRow>
            <div className="mt-[7px]"><CheckRow><u>S</u>creen Reader</CheckRow></div>
          </div>
          <div className="ml-auto mr-[39px] mt-[21px] flex gap-x-[6px]">
            <div className="w-[170px]"><Btn icon="database"><u>D</u>atabase</Btn></div>
            <div className="w-[170px]"><Btn icon="exit">E<u>x</u>it Application</Btn></div>
          </div>
        </div>
      </div>

      {/* Status bar */}
      <div className="flex-1 bg-[#f3f2f1] border-t border-[#c8c8c8] pl-[1px] text-[11.5px] leading-[20px] text-[#555]">Enter project information</div>
    </div>
  );
};

export default App;
